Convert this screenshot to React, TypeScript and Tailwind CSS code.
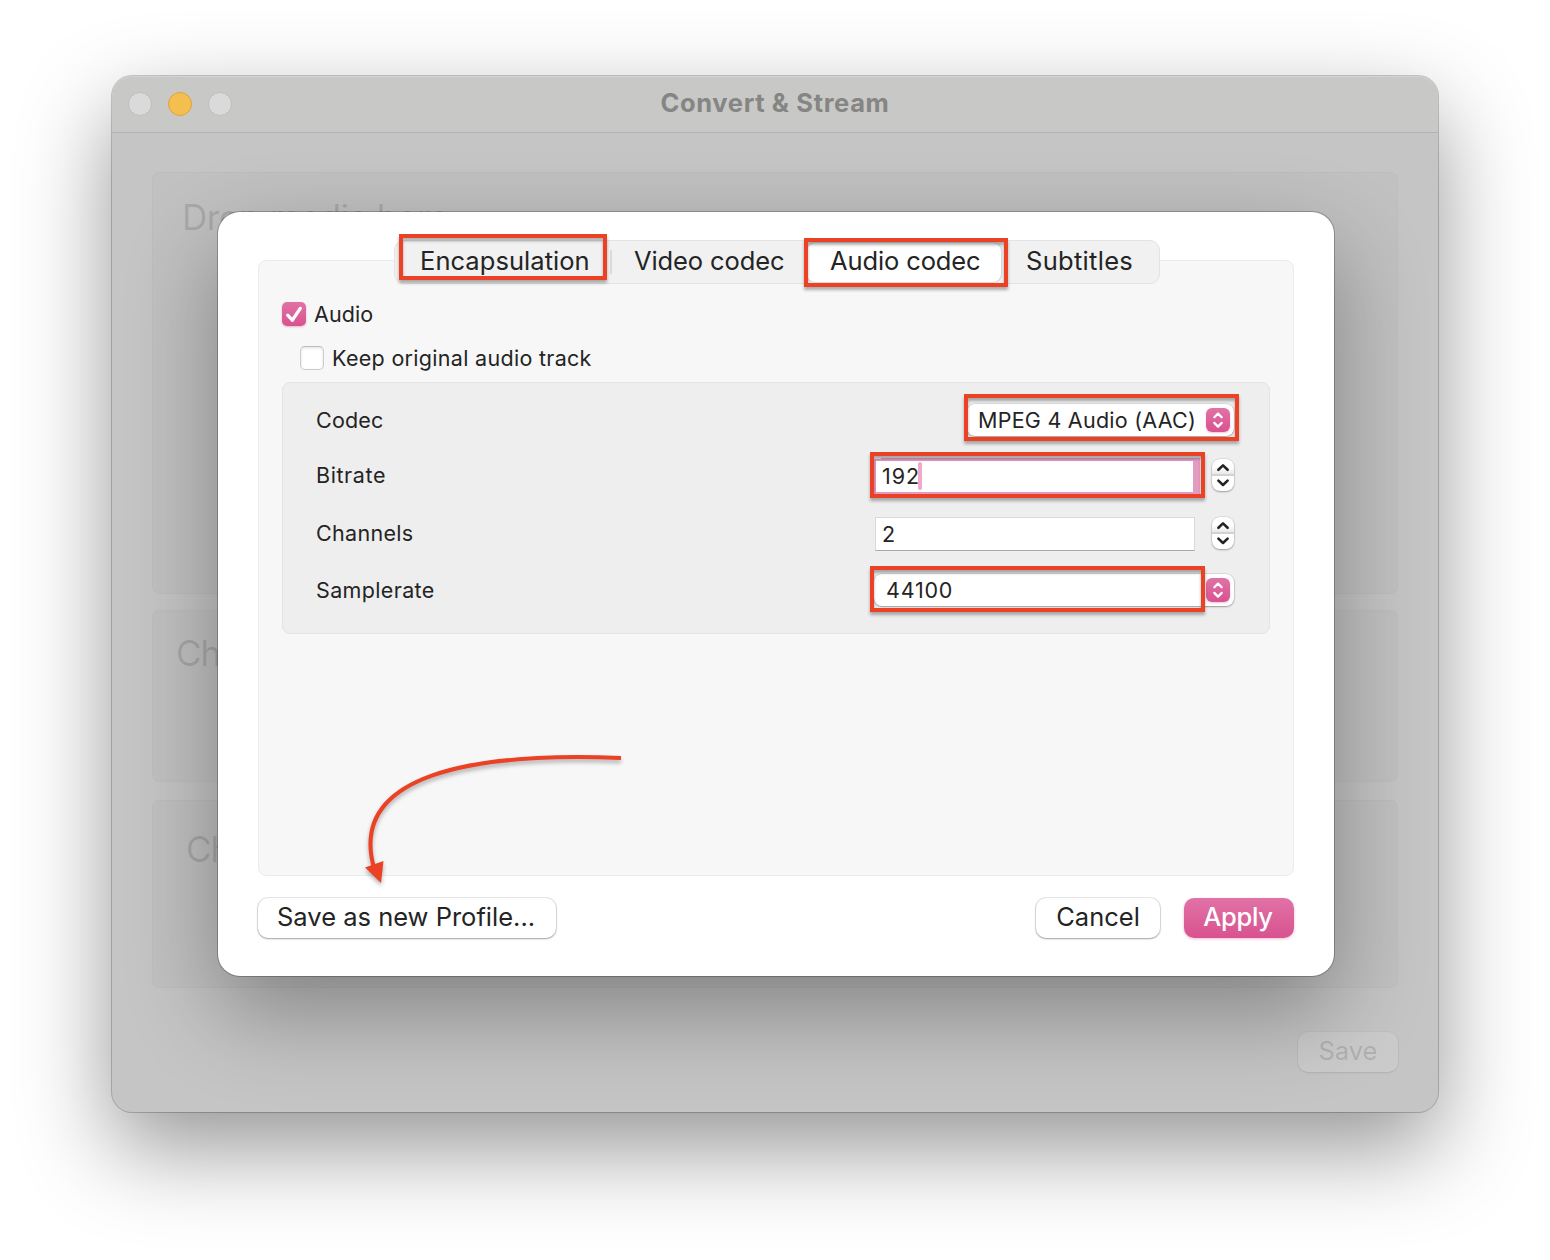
import React from "react";

const CARD = "rounded-[8px] border border-black/[0.025] bg-black/[0.02]";

function UpDown() {
  return (
    <span className="flex h-6 w-6 shrink-0 items-center justify-center rounded-[6px] bg-linear-to-b from-[#e072a6] to-[#d8528f] shadow-[0_1px_2px_rgba(216,82,143,0.35)]">
      <svg width="24" height="24" viewBox="0 0 24 24" fill="none" stroke="#fff" strokeWidth="2.2" strokeLinecap="round" strokeLinejoin="round">
        <path d="M8.3 9.3 12 5.6l3.7 3.7M8.3 14.9l3.7 3.7 3.7-3.7" />
      </svg>
    </span>
  );
}

function Stepper() {
  return (
    <div className="h-8 w-[22px] shrink-0 rounded-[8px] bg-white shadow-[0_0_0_0.5px_rgba(0,0,0,0.12),0_1px_2px_rgba(0,0,0,0.3)]">
      <svg width="22" height="32" viewBox="0 0 22 32" fill="none">
        <defs>
          <linearGradient id="stepper-shade" x1="0" y1="0" x2="0" y2="1">
            <stop offset="0" stopColor="#fff" />
            <stop offset="1" stopColor="#e9e9e9" />
          </linearGradient>
        </defs>
        <rect y="8" width="22" height="7" fill="url(#stepper-shade)" />
        <rect y="15" width="22" height="2" fill="#d2d2d2" />
        <path d="M6.400 10.800 11 6.400l4.600 4.400M6.400 21.600l4.600 4.400 4.600-4.400" stroke="#242424" strokeWidth="2.6" strokeLinecap="round" strokeLinejoin="round" />
      </svg>
    </div>
  );
}

function Highlight({ place }: { place: string }) {
  return (
    <div
      className={
        "absolute z-20 border-4 border-[#eb4125] shadow-[0_3px_3px_rgba(0,0,0,0.3),inset_0_3px_3px_rgba(0,0,0,0.3)] " + place
      }
    />
  );
}

function Dialog() {
  return (
    <div className="absolute top-[136px] left-[106px] flex h-[764px] w-[1116px] flex-col rounded-[22px] bg-white px-10 pt-[28px] shadow-[0_0_0_1px_rgba(0,0,0,0.24),0_36px_92px_rgba(0,0,0,0.33)]">
      <div className="relative z-10 ml-[136px] flex h-11 w-[766px] items-center rounded-[10px] border border-[#e3e3e3] bg-[#f1f1f1] text-[25.5px] text-[#242424]">
        <span className="w-[215px] pb-0.5 pl-[25px] tracking-[0.05px]">Encapsulation</span>
        <span className="h-6 w-0.5 bg-[#dadada]" />
        <span className="w-[195px] pb-0.5 pl-[22px] tracking-[-0.1px]">Video codec</span>
        <span className="flex h-[39px] w-[194px] items-center rounded-[8px] bg-white pb-0.5 pl-[23px] tracking-[-0.12px] shadow-[0_0_2px_rgba(0,0,0,0.35)]">
          Audio codec
        </span>
        <span className="pb-0.5 pl-[25px] tracking-[0.3px]">Subtitles</span>
      </div>

      <div className="-mt-[24px] h-[616px] rounded-[8px] border border-[#ebebeb] bg-[#f7f7f7] px-[23px] pt-[41px] text-[21.5px] text-[#242424]">
        <div className="flex h-6 items-center">
          <span className="flex h-6 w-6 items-center justify-center rounded-[5px] bg-linear-to-b from-[#e072a6] to-[#d8528f] shadow-[0_1px_2px_rgba(216,82,143,0.4)]">
            <svg width="24" height="24" viewBox="0 0 24 24" fill="none" stroke="#fff" strokeWidth="3.3" strokeLinecap="round" strokeLinejoin="round">
              <path d="m5.700 13.200 4.600 5L18.300 6.400" />
            </svg>
          </span>
          <span className="ml-2 tracking-[0.1px]">Audio</span>
        </div>
        <div className="mt-5 ml-[18px] flex h-6 items-center">
          <span className="h-6 w-6 rounded-[5px] border border-[#cccccc] border-t-[#bcbcbc] bg-white shadow-[inset_0_1px_3px_rgba(0,0,0,0.12)]" />
          <span className="ml-2 tracking-[0.3px]">Keep original audio track</span>
        </div>

        <div className="mt-3 h-[252px] rounded-[8px] border border-[#e3e3e3] bg-[#eeeeee] pt-[21px] pr-[35px] pl-[33px]">
          <div className="flex h-8 items-center justify-between">
            <span className="tracking-[0.18px]">Codec</span>
            <div className="flex h-8 w-[267px] items-center justify-between rounded-[8px] bg-white pr-1 pl-[11px] tracking-[0.25px] shadow-[0_0_0_0.5px_rgba(0,0,0,0.15),0_1px_2px_rgba(0,0,0,0.3)]">
              MPEG 4 Audio (AAC)
              <UpDown />
            </div>
          </div>
          <div className="mt-[23px] flex h-8 items-center">
            <span className="grow tracking-[0.6px]">Bitrate</span>
            <div className="mt-0.5 mr-[17px] flex h-[33px] w-[319px] items-center border border-[#e49bc1] bg-white pl-1.5 tracking-[0.9px] shadow-[0_0_0_1px_#e49bc1,6px_0_0_#e49bc1,6px_-2px_0_#e49bc1,6px_2px_0_#e49bc1]">
              192
              <span className="-ml-0.5 h-7 w-1 rounded-sm bg-[#f0a9cb]" />
            </div>
            <span className="w-px" />
            <Stepper />
          </div>
          <div className="mt-[25px] flex h-[34px] items-center">
            <span className="grow tracking-[0.3px]">Channels</span>
            <div className="mt-0.5 mr-[17px] flex h-[34px] w-[320px] items-center border border-[#d9d9d9] border-b-[#aaaaaa] bg-white pl-[6px]">2</div>
            <Stepper />
          </div>
          <div className="mt-6 flex h-8 items-center justify-between">
            <span className="tracking-[0.35px]">Samplerate</span>
            <div className="flex h-8 w-[360px] items-center justify-between rounded-[8px] bg-white pr-1 pl-3 tracking-[0.8px] shadow-[0_0_0_0.5px_rgba(0,0,0,0.15),0_1px_2px_rgba(0,0,0,0.3)]">
              44100
              <UpDown />
            </div>
          </div>
        </div>
      </div>

      <div className="mt-[22px] flex h-10 items-center text-[25.5px] text-[#242424]">
        <button className="flex h-10 w-[298px] items-center rounded-[10px] bg-white pb-0.5 pl-[19px] shadow-[0_0_0_1px_rgba(0,0,0,0.09),0_1px_2px_rgba(0,0,0,0.3)]">
          Save as new Profile...
        </button>
        <button className="ml-auto h-10 w-[124px] rounded-[10px] bg-white pb-0.5 shadow-[0_0_0_1px_rgba(0,0,0,0.09),0_1px_2px_rgba(0,0,0,0.3)]">
          Cancel
        </button>
        <button className="ml-6 h-10 w-[110px] rounded-[10px] bg-linear-to-b from-[#e072a6] to-[#d8528f] pr-0.5 pb-0.5 font-medium tracking-[-0.3px] text-white shadow-[0_1px_3px_rgba(216,82,143,0.4)]">
          Apply
        </button>
      </div>

      <Highlight place="top-[22px] left-[181px] h-[46px] w-[208px]" />
      <Highlight place="top-[26px] left-[586px] h-[49px] w-[204px]" />
      <Highlight place="top-[182px] left-[746px] h-[47px] w-[275px]" />
      <Highlight place="top-[240px] left-[652px] h-[46px] w-[335px]" />
      <Highlight place="top-[354px] left-[652px] h-[46px] w-[335px]" />

      <svg className="absolute top-[528px] left-[132px] drop-shadow-[0_3px_2px_rgba(0,0,0,0.3)]" width="280" height="150" viewBox="350 740 280 150" fill="none">
        <path d="M621 758C470 752 348 775 374 868" stroke="#eb4125" strokeWidth="4" />
        <path d="m365 867.500 18.500-6.500L381 883z" fill="#eb4125" />
      </svg>
    </div>
  );
}

export default function App() {
  return (
    <div className="h-[1260px] w-[1550px] overflow-hidden bg-white pt-[76px] pl-[112px] font-['Inter',sans-serif]">
      <div className="relative flex h-[1036px] w-[1326px] flex-col rounded-[20px] bg-[#c5c5c5] shadow-[0_0_0_1px_rgba(0,0,0,0.2),0_36px_92px_rgba(0,0,0,0.42)]">
        <div className="relative flex h-[57px] shrink-0 items-center justify-center rounded-t-[20px] border-t border-b border-t-[#d3d3d2] border-b-[#b3b3b2] bg-[#c8c8c6]">
          <div className="absolute top-[15px] left-4 flex gap-4">
            <span className="h-6 w-6 rounded-full border border-[#bebebe] bg-[#dadada]" />
            <span className="h-6 w-6 rounded-full border border-[#dda33f] bg-[#f5bf4f]" />
            <span className="h-6 w-6 rounded-full border border-[#bebebe] bg-[#dadada]" />
          </div>
          <span className="pb-[3px] text-[25.5px] font-bold tracking-[0.65px] text-[#858583]">Convert &amp; Stream</span>
        </div>

        <div className="flex grow flex-col px-10 pt-[39px] text-[35px] leading-[42px] text-black/[0.13]">
          <div className={CARD + " h-[422px] pt-[23px] pl-[29px] tracking-[-0.52px]"}>Drop media here</div>
          <div className={CARD + " mt-4 h-[172px] pt-[21px] pl-[23px] tracking-[-1px]"}>Choose Profile</div>
          <div className={CARD + " mt-[18px] h-[188px] pt-[27px] pl-[33px] tracking-[-1px]"}>Choose Destination</div>
          <button className="mt-[44px] h-10 w-[100px] self-end rounded-[10px] bg-white/10 pb-[3px] text-[25.5px] leading-[37px] text-black/[0.15] shadow-[0_0_0_1px_rgba(0,0,0,0.025),0_1px_2px_rgba(0,0,0,0.08)]">
            Save
          </button>
        </div>

        <Dialog />
      </div>
    </div>
  );
}
